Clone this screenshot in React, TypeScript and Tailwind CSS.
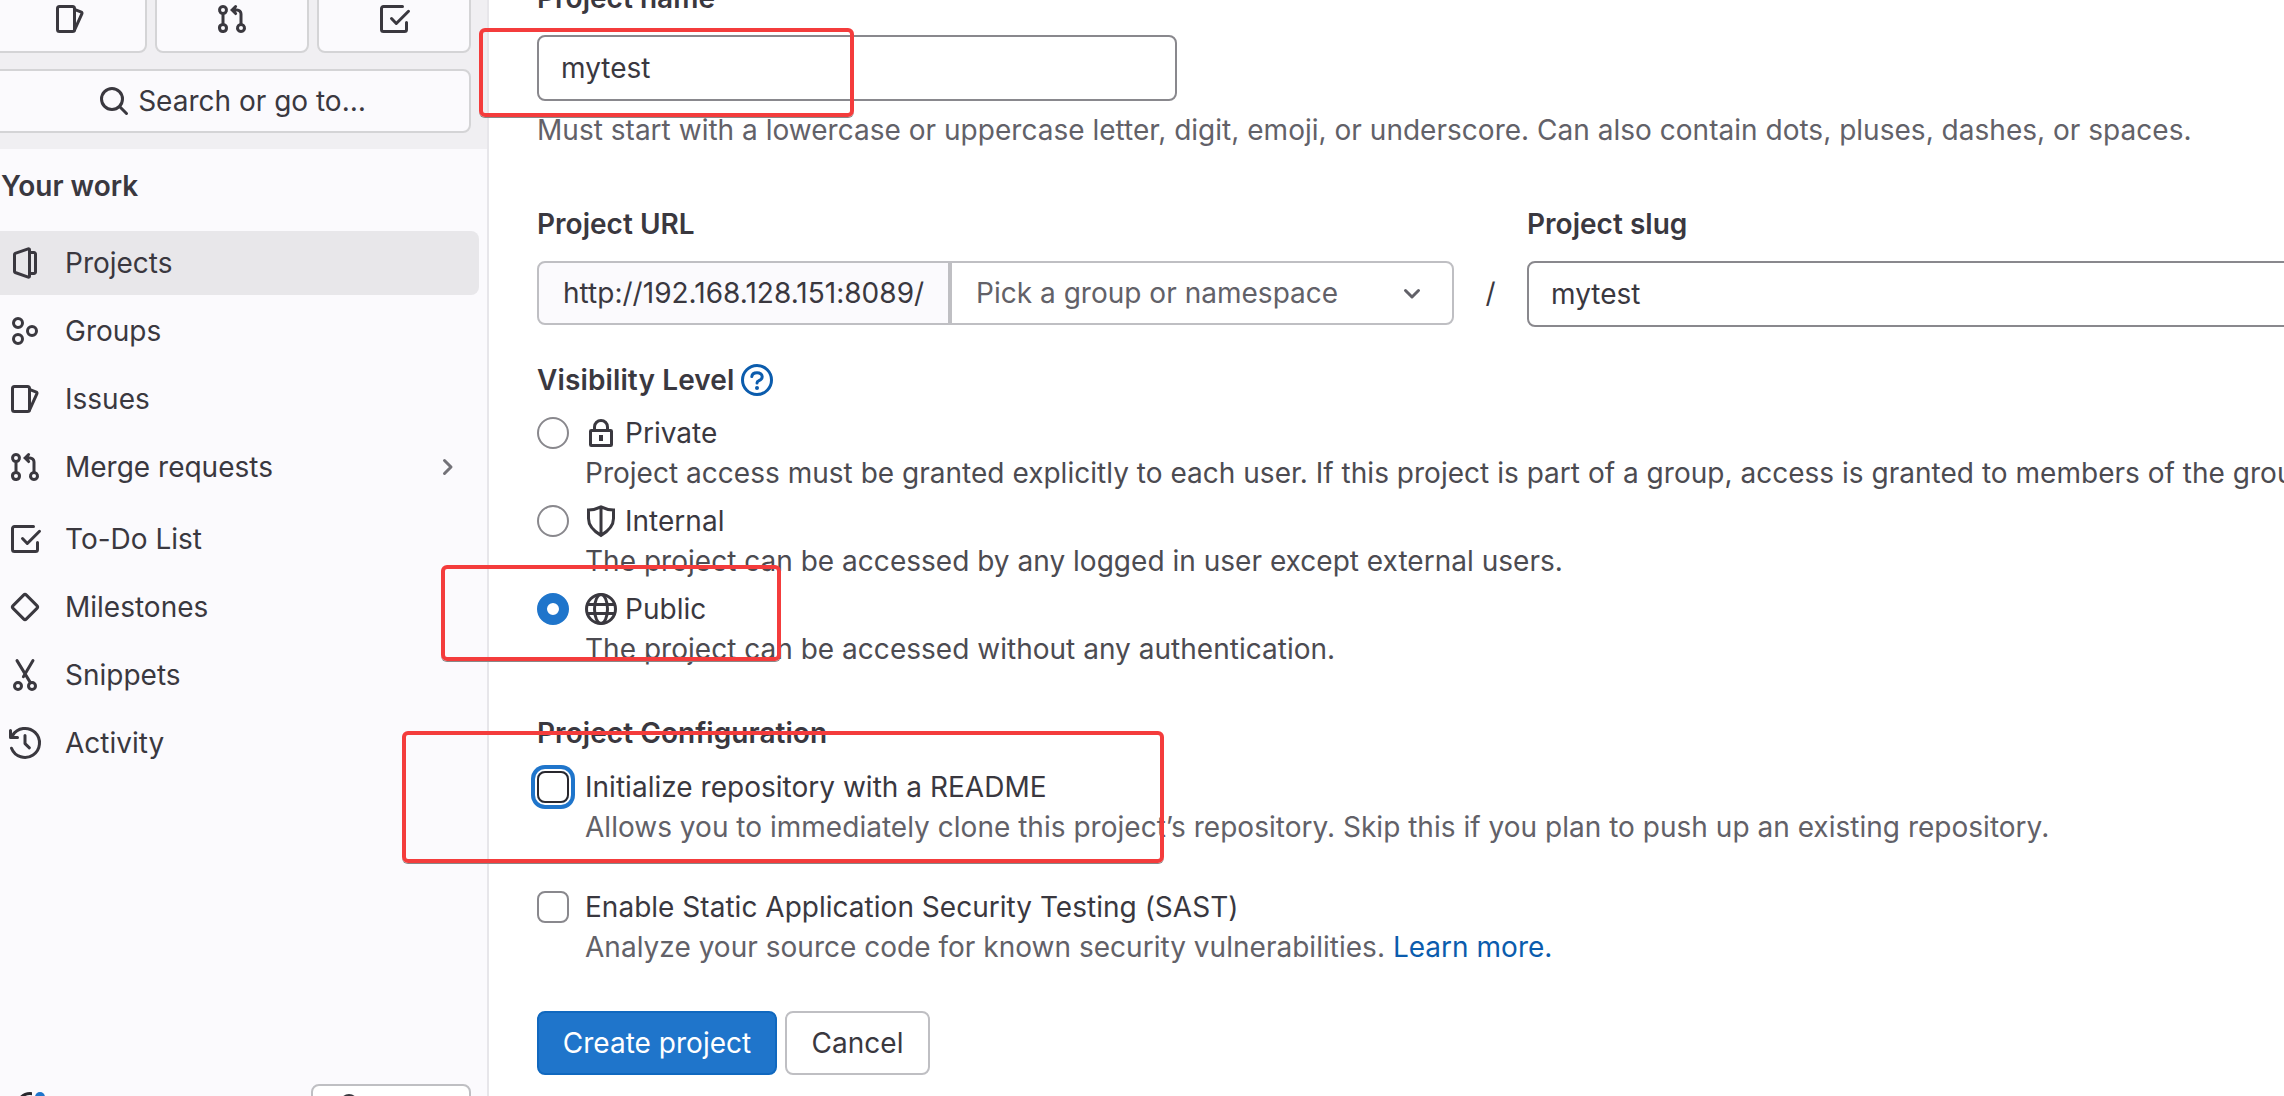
import React from "react";

const Svg = ({ children, className = "", fill = false }: { children: React.ReactNode; className?: string; fill?: boolean }) => (
  <svg
    viewBox="0 0 16 16"
    className={"h-8 w-8 shrink-0 overflow-visible " + className}
    fill={fill ? "currentColor" : "none"}
    stroke={fill ? "none" : "currentColor"}
    strokeWidth={1.5}
    strokeLinecap="round"
    strokeLinejoin="round"
  >
    {children}
  </svg>
);

const ProjectIcon = () => (
  <Svg>
    <path d="M2.75 3.7a.5.5 0 0 1 .33-.47L9.6.95a.5.5 0 0 1 .65.47v13.16a.5.5 0 0 1-.65.47l-6.52-2.28a.5.5 0 0 1-.33-.47z" />
    <path d="M10.5 2.75h2a.75.75 0 0 1 .75.75v9a.75.75 0 0 1-.75.75h-2" />
  </Svg>
);
const GroupIcon = () => (
  <Svg>
    <circle cx="4.5" cy="4" r="2.25" />
    <circle cx="11.5" cy="8" r="2.25" />
    <circle cx="4.5" cy="12" r="2.25" />
  </Svg>
);
const IssuesIcon = () => (
  <Svg>
    <rect x="1.75" y="1.75" width="8.5" height="12.5" rx="1" />
    <path d="M10.5 3.3l3.2 1.3a.5.5 0 0 1 .27.68L10.25 13.6" />
  </Svg>
);
const MergeIcon = () => (
  <Svg fill>
    <path
      fillRule="evenodd"
      d="M10.34 1.22a.75.75 0 0 0-1.06 0L7.53 2.97 7 3.5l.53.53 1.75 1.75a.75.75 0 1 0 1.06-1.06l-.47-.47h.63c.69 0 1.25.56 1.25 1.25v4.614a2.501 2.501 0 1 0 1.5 0V5.5a2.75 2.75 0 0 0-2.75-2.75h-.63l.47-.47a.75.75 0 0 0 0-1.06zM13.5 12.5a1 1 0 1 1-2 0 1 1 0 0 1 2 0zm-9 0a1 1 0 1 1-2 0 1 1 0 0 1 2 0zm1.5 0a2.5 2.5 0 1 1-3.25-2.386V5.886a2.501 2.501 0 1 1 1.5 0v4.228A2.501 2.501 0 0 1 6 12.5zm-1.5-9a1 1 0 1 1-2 0 1 1 0 0 1 2 0z"
    />
  </Svg>
);
const TodoIcon = () => (
  <Svg>
    <path d="M12.25 1.75H2.75a1 1 0 0 0-1 1v10.5a1 1 0 0 0 1 1h10.5a1 1 0 0 0 1-1V9.75" />
    <path d="M6.75 7.75l2.4 2.48 6.1-6.1" />
  </Svg>
);
const MilestoneIcon = () => (
  <Svg>
    <rect x="3.285" y="3.285" width="9.43" height="9.43" rx="1" transform="rotate(45 8 8)" />
  </Svg>
);
const SnippetIcon = () => (
  <Svg>
    <circle cx="4.5" cy="13.5" r="1.75" />
    <circle cx="11.5" cy="13.5" r="1.75" />
    <path d="M4 .8l6.7 11M12 .8L7.2 8.9" />
  </Svg>
);
const HistoryIcon = () => (
  <Svg>
    <path d="M1.25 10.6A7.25 7.25 0 1 0 1.8 4.2L1.3 5" />
    <path d="M.75 1.75v3.5h3.5M8 4.25V8.3l2.2 2.1" />
  </Svg>
);
const SearchIcon = () => (
  <Svg>
    <circle cx="7" cy="7" r="5.25" />
    <path d="M10.9 10.9l3.35 3.35" />
  </Svg>
);
const LockIcon = () => (
  <Svg>
    <rect x="2.75" y="6.75" width="10.5" height="7.5" rx=".4" />
    <path d="M4.75 6.5V5a3.25 3.25 0 0 1 6.5 0v1.5" />
    <path d="M8 9v3" strokeWidth="2" strokeLinecap="butt" />
  </Svg>
);
const ShieldIcon = () => (
  <Svg>
    <path d="M8 .95C6 2 4 2.4 1.75 2.5v4.3c0 3.6 2.6 6.3 6.25 8.4 3.65-2.1 6.25-4.8 6.25-8.4V2.5C12 2.4 10 2 8 .95zM8 1v14" strokeLinejoin="miter" strokeLinecap="butt" />
  </Svg>
);
const EarthIcon = () => (
  <Svg>
    <circle cx="8" cy="8" r="7.25" />
    <ellipse cx="8" cy="8" rx="3.25" ry="7.25" />
    <path d="M1.2 5.75h13.6M1.2 10.25h13.6" strokeLinecap="butt" />
  </Svg>
);
const QuestionIcon = () => (
  <Svg className="text-[#0b5cad]">
    <circle cx="8" cy="8" r="7.25" />
    <path d="M5.4 6.3C5.5 5.1 6.6 4.35 8 4.35s2.6.75 2.6 2c0 1.1-.8 1.6-1.6 1.95C8.2 8.65 8 8.9 8 9.5" />
    <circle cx="8" cy="12" r="1" fill="currentColor" stroke="none" />
  </Svg>
);

const nav = [
  { label: "Projects", Icon: ProjectIcon, active: true },
  { label: "Groups", Icon: GroupIcon },
  { label: "Issues", Icon: IssuesIcon },
  { label: "Merge requests", Icon: MergeIcon, expandable: true },
  { label: "To-Do List", Icon: TodoIcon },
  { label: "Milestones", Icon: MilestoneIcon },
  { label: "Snippets", Icon: SnippetIcon },
  { label: "Activity", Icon: HistoryIcon },
];

function Sidebar() {
  return (
    <aside className="flex h-full w-[489px] shrink-0 flex-col overflow-hidden border-r-2 border-[#e7e6ea] bg-[#fbfafd]">
      <div className="-ml-[7px] h-[149px] shrink-0 bg-[#f0eff2] pr-4">
        <div className="-mt-[15px] flex gap-2">
          {[IssuesIcon, MergeIcon, TodoIcon].map((Icon, i) => (
            <button key={i} className="flex h-[68px] w-[154px] items-center justify-center rounded-lg border-2 border-[#d4d4d6] bg-[#fbfafd]">
              <Icon />
            </button>
          ))}
        </div>
        <button className="mt-4 flex h-16 w-[478px] items-center justify-center gap-2 rounded-lg border-2 border-[#d4d4d6] bg-[#fbfafd]">
          <SearchIcon />
          <span>Search or go to…</span>
        </button>
      </div>
      <h2 className="mt-4 h-[42px] pl-px leading-[42px] font-semibold">Your work</h2>
      <nav className="mt-6 flex flex-col gap-1">
        {nav.map(({ label, Icon, active, expandable }) => (
          <a
            key={label}
            className={
              "mr-2 flex h-16 items-center rounded-r-lg pl-[9px] " + (active ? "bg-[#e8e7ea]" : "") + (expandable ? " mb-1" : "")
            }
          >
            <Icon />
            <span className="ml-6">{label}</span>
            {expandable && (
              <Svg className="mr-4 ml-auto text-[#737278]">
                <path d="M6.75 4.75L10 8l-3.25 3.25" />
              </Svg>
            )}
          </a>
        ))}
      </nav>
      <div className="mt-auto flex h-3 items-start justify-between pr-4 pl-4">
        <div className="flex h-3 items-end gap-[3px] overflow-hidden">
          <div className="h-1 w-4 overflow-hidden">
            <div className="h-7 w-7 rounded-full border-[3px] border-[#28272d]" />
          </div>
          <div className="h-1 w-2.5 overflow-hidden">
            <div className="h-2.5 w-2.5 rounded-full bg-[#1f75cb]" />
          </div>
        </div>
        <div className="h-16 w-40 shrink-0 rounded-lg border-2 border-[#bfbfc3] bg-white">
          <div className="mt-2 ml-[27px] h-5 w-[18px] rounded-full border-[3px] border-[#3a383f]" />
        </div>
      </div>
    </aside>
  );
}

const levels = [
  {
    name: "Private",
    Icon: LockIcon,
    text: "Project access must be granted explicitly to each user. If this project is part of a group, access is granted to members of the group.",
  },
  { name: "Internal", Icon: ShieldIcon, text: "The project can be accessed by any logged in user except external users." },
  { name: "Public", Icon: EarthIcon, text: "The project can be accessed without any authentication.", checked: true },
];

function Form() {
  return (
    <main className="w-[1795px] shrink-0 overflow-hidden pl-12 tracking-[0.02px] whitespace-nowrap">
      <label className="-mt-[22px] block h-10 leading-10 font-semibold">Project name</label>
      <div className="mt-[17px] flex h-[66px] w-[640px] items-center rounded-lg border-2 border-[#89888d] px-[22px]">mytest</div>
      <p className="mt-[9px] h-10 leading-10 text-[#626168]">
        Must start with a lowercase or uppercase letter, digit, emoji, or underscore. Can also contain dots, pluses, dashes, or spaces.
      </p>

      <div className="mt-[54px] flex">
        <div className="w-[917px] shrink-0">
          <label className="block h-10 leading-10 font-semibold">Project URL</label>
          <div className="mt-[17px] flex h-16">
            <div className="flex w-[413px] shrink-0 items-center rounded-l-lg border-2 border-[#bfbfc3] bg-[#fbfafd] pl-6">
              http://192.168.128.151:8089/
            </div>
            <div className="flex flex-1 items-center justify-between rounded-r-lg border-2 border-[#bfbfc3] pr-6 pl-6 text-[#626168]">
              Pick a group or namespace
              <Svg>
                <path d="M4.75 6.75L8 10l3.25-3.25" />
              </Svg>
            </div>
          </div>
        </div>
        <div className="mt-[57px] flex h-16 w-[73px] shrink-0 items-center justify-center">/</div>
        <div className="w-[900px] shrink-0">
          <label className="block h-10 leading-10 font-semibold">Project slug</label>
          <div className="mt-[17px] flex h-[66px] items-center rounded-l-lg border-2 border-[#89888d] px-[22px]">mytest</div>
        </div>
      </div>

      <div className="mt-[33px] flex h-10 items-center gap-[7px] font-semibold tracking-[0.12px]">
        Visibility Level
        <QuestionIcon />
      </div>
      <div className="mt-[13px]">
        {levels.map(({ name, Icon, text, checked }) => (
          <div key={name} className="flex h-22 gap-4">
            <div
              className={
                "mt-1 h-8 w-8 shrink-0 rounded-full " + (checked ? "border-[10px] border-[#1f75cb]" : "border-2 border-[#89888d]")
              }
            />
            <div>
              <div className="flex h-10 items-center gap-2">
                <Icon />
                {name}
              </div>
              <p className="h-10 leading-10 text-[#4c4b51]">{text}</p>
            </div>
          </div>
        ))}
      </div>

      <h3 className="mt-[36px] h-10 leading-10 font-semibold tracking-[0.06px]">Project Configuration</h3>
      <div className="mt-[14px] flex h-20 gap-4">
        <div className="mt-1 h-8 w-8 shrink-0 rounded-lg border-2 border-[#28272d] shadow-[0_0_0_2px_#fff,0_0_0_6px_#1f75cb]" />
        <div className="leading-10">
          <p>Initialize repository with a README</p>
          <p className="text-[#626168]">
            Allows you to immediately clone this project’s repository. Skip this if you plan to push up an existing repository.
          </p>
        </div>
      </div>
      <div className="mt-10 flex h-20 gap-4">
        <div className="mt-1 h-8 w-8 shrink-0 rounded-lg border-2 border-[#89888d]" />
        <div className="leading-10">
          <p>Enable Static Application Security Testing (SAST)</p>
          <p className="text-[#626168]">
            Analyze your source code for known security vulnerabilities. <a className="text-[#0b5cad]">Learn more.</a>
          </p>
        </div>
      </div>
      <div className="mt-[44px] flex gap-2">
        <button className="h-16 w-60 rounded-lg border-2 border-[#1068bf] bg-[#1f75cb] text-white">Create project</button>
        <button className="h-16 w-[145px] rounded-lg border-2 border-[#bfbfc3] bg-white">Cancel</button>
      </div>
    </main>
  );
}

export default function App() {
  return (
    <div className="relative flex h-[1096px] w-[2284px] overflow-hidden bg-white font-[Inter,sans-serif] text-[28px] text-[#3a383f]">
      <Sidebar />
      <Form />
      <div className="absolute top-[28px] left-[479px] h-[89px] w-[375px] rounded-md border-4 border-[#f43c3c] shadow-[0_1px_0_#888]" />
      <div className="absolute top-[565px] left-[441px] h-[96px] w-[340px] rounded-md border-4 border-[#f43c3c] shadow-[0_1px_0_#888]" />
      <div className="absolute top-[731px] left-[402px] h-[132px] w-[762px] rounded-md border-4 border-[#f43c3c] shadow-[0_1px_0_#888]" />
    </div>
  );
}
